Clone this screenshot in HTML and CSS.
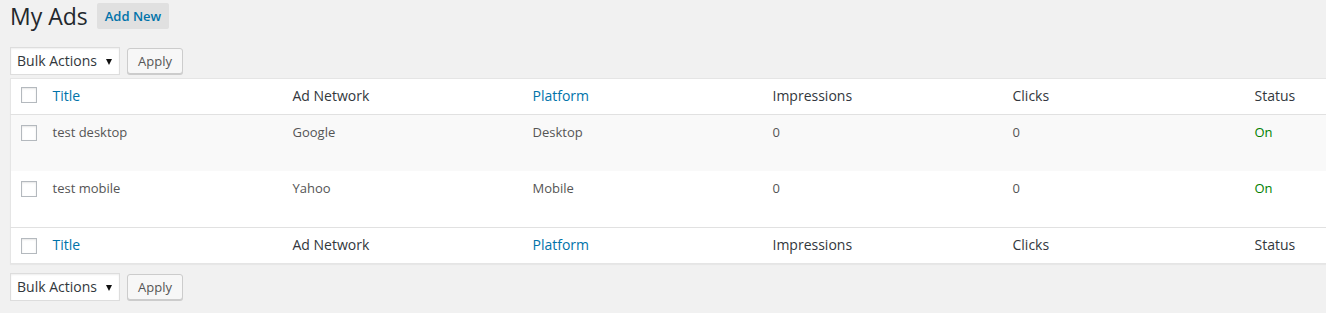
FILE: index.html
```html
<!DOCTYPE html>
<html lang="en">
<head>
<meta charset="utf-8">
<title>My Ads</title>
<link rel="stylesheet" href="styles.css">
</head>
<body>
<div class="wrap">
  <div class="page-head">
    <h1 class="page-title">My Ads</h1>
    <a class="title-action" href="#">Add New</a>
  </div>

  <div class="tablenav top">
    <div class="fake-select"><span>Bulk Actions</span><i class="caret"></i></div>
    <button class="button" type="button">Apply</button>
  </div>

  <table class="list-table">
    <colgroup>
      <col class="c-check"><col class="c-col"><col class="c-col"><col class="c-col"><col class="c-col"><col class="c-clicks"><col class="c-col">
    </colgroup>
    <thead>
      <tr>
        <td class="check-column head-check"><input type="checkbox" class="cb"></td>
        <th><a href="#" class="sort">Title</a></th>
        <th>Ad Network</th>
        <th><a href="#" class="sort">Platform</a></th>
        <th>Impressions</th>
        <th>Clicks</th>
        <th>Status</th>
      </tr>
    </thead>
    <tbody>
      <tr class="alt">
        <th class="check-column"><input type="checkbox" class="cb"></th>
        <td>test desktop</td>
        <td>Google</td>
        <td>Desktop</td>
        <td>0</td>
        <td>0</td>
        <td class="status-on">On</td>
      </tr>
      <tr>
        <th class="check-column"><input type="checkbox" class="cb"></th>
        <td>test mobile</td>
        <td>Yahoo</td>
        <td>Mobile</td>
        <td>0</td>
        <td>0</td>
        <td class="status-on">On</td>
      </tr>
    </tbody>
    <tfoot>
      <tr>
        <td class="check-column foot-check"><input type="checkbox" class="cb"></td>
        <th><a href="#" class="sort">Title</a></th>
        <th>Ad Network</th>
        <th><a href="#" class="sort">Platform</a></th>
        <th>Impressions</th>
        <th>Clicks</th>
        <th>Status</th>
      </tr>
    </tfoot>
  </table>

  <div class="tablenav bottom">
    <div class="fake-select"><span>Bulk Actions</span><i class="caret"></i></div>
    <button class="button" type="button">Apply</button>
  </div>
</div>
</body>
</html>
```

FILE: styles.css
```css
html, body {
  margin: 0;
  padding: 0;
  overflow: hidden;
}
body {
  background: #f1f1f1;
  color: #444;
  font-family: "Open Sans", "Noto Sans", sans-serif;
  font-size: 13px;
  line-height: 1.4em;
}
.wrap {
  padding-left: 10px;
}
.page-head {
  display: flex;
  align-items: center;
  height: 30px;
  padding-top: 1px;
}
.page-title {
  margin: 0;
  font-size: 23px;
  font-weight: 400;
  line-height: 29px;
  color: #23282d;
}
.title-action {
  margin-left: 9px;
  margin-top: -1px;
  padding: 4px 8px;
  background: #e0e0e0;
  color: #0073aa;
  font-size: 13px;
  font-weight: 600;
  line-height: 18px;
  text-decoration: none;
  border-radius: 2px;
}
.tablenav {
  display: flex;
  align-items: flex-start;
  gap: 7px;
  height: 28px;
}
.tablenav.top {
  padding-top: 16px;
  margin-bottom: 3px;
}
.tablenav.bottom {
  padding-top: 9px;
}
.fake-select {
  box-sizing: border-box;
  width: 110px;
  height: 28px;
  display: flex;
  align-items: center;
  padding: 0 7px 0 6px;
  background: #fff;
  border: 1px solid #ddd;
  box-shadow: inset 0 1px 2px rgba(0,0,0,.07);
  color: #32373c;
  font-size: 14px;
}
.fake-select span {
  flex: 1;
  line-height: 26px;
}
.caret {
  width: 0;
  height: 0;
  border-left: 3px solid transparent;
  border-right: 3px solid transparent;
  border-top: 6px solid #111;
  margin-top: 1px;
}
.button {
  box-sizing: border-box;
  height: 26px;
  margin-top: 1px;
  padding: 0 10px 1px;
  background: #f7f7f7;
  border: 1px solid #ccc;
  border-radius: 3px;
  box-shadow: 0 1px 0 #ccc;
  color: #555;
  font-family: "Open Sans", "Noto Sans", sans-serif;
  font-size: 13px;
  line-height: 22px;
}
.list-table {
  border-collapse: collapse;
  border-spacing: 0;
  table-layout: fixed;
  width: 1474px;
  background: #fff;
  border: 1px solid #e5e5e5;
  box-shadow: 0 1px 1px rgba(0,0,0,.04);
}
.c-check { width: 32px; }
.c-col { width: 240px; }
.c-clicks { width: 242px; }
.list-table th,
.list-table td {
  text-align: left;
  vertical-align: top;
  font-weight: 400;
}
.list-table thead th,
.list-table thead td,
.list-table tfoot th,
.list-table tfoot td {
  padding: 7px 10px 9px;
  height: 19px;
  font-size: 14px;
  line-height: 19px;
  color: #32373c;
}
.list-table thead tr {
  border-bottom: 1px solid #e1e1e1;
}
.list-table tfoot tr {
  border-top: 1px solid #e1e1e1;
}
.sort {
  color: #0073aa;
  text-decoration: none;
}
.list-table tbody td {
  padding: 7px 10px 29px;
  line-height: 20px;
  font-size: 13px;
  color: #555;
}
.list-table tbody tr.alt {
  background: #f9f9f9;
}
.list-table .check-column {
  padding: 10px 0 0 10px;
}
.list-table thead .head-check {
  padding: 8px 0 0 10px;
}
.list-table tfoot .foot-check {
  padding: 10px 0 0 10px;
}
.cb {
  appearance: none;
  -webkit-appearance: none;
  display: block;
  box-sizing: border-box;
  width: 16px;
  height: 16px;
  margin: 0;
  background: #fff;
  border: 1px solid #b4b9be;
  box-shadow: inset 0 1px 2px rgba(0,0,0,.1);
}
.list-table tbody td.status-on {
  color: #008000;
}
```
